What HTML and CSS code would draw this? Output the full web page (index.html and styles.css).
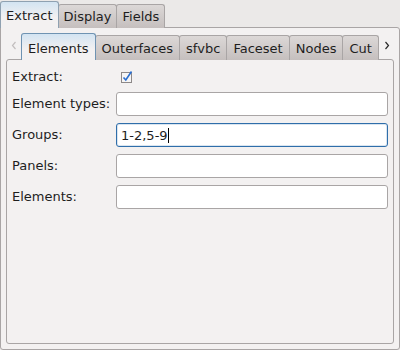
FILE: index.html
```html
<!DOCTYPE html>
<html lang="en">
<head>
  <meta charset="UTF-8">
  <title>Extract</title>
  <link rel="stylesheet" href="styles.css">
</head>
<body>
  <div class="tabwidget outer">
    <div class="tabbar">
      <div class="tab selected">Extract</div>
      <div class="tab">Display</div>
      <div class="tab">Fields</div>
    </div>
    <div class="pane">
      <div class="tabwidget inner">
        <div class="tabbar">
          <div class="scroll">
            <svg width="6" height="9" viewBox="0 0 6 9"><polyline points="4.5,1 1.5,4.5 4.5,8" fill="none" stroke="#c2bebe" stroke-width="1.2"/></svg>
          </div>
          <div class="tab selected">Elements</div>
          <div class="tab">Outerfaces</div>
          <div class="tab">sfvbc</div>
          <div class="tab">Faceset</div>
          <div class="tab">Nodes</div>
          <div class="tab last">Cut</div>
          <div class="scroll">
            <svg width="6" height="9" viewBox="0 0 6 9"><polyline points="1.5,1 4.5,4.5 1.5,8" fill="none" stroke="#2a2a2a" stroke-width="1.2"/></svg>
          </div>
        </div>
        <div class="pane">
          <div class="form">
            <label>Extract:</label>
            <div class="check">
              <svg width="13" height="13" viewBox="0 0 13 13">
                <rect x="0.5" y="2.5" width="10" height="10" fill="#f6f5f5" stroke="#8d8989"/>
                <polyline points="2.5,7.5 4.8,10 10.5,1.5" fill="none" stroke="#2b6fd0" stroke-width="1.6"/>
              </svg>
            </div>
            <label>Element types:</label>
            <div class="field"></div>
            <label>Groups:</label>
            <div class="field focus">1-2,5-9<span class="caret"></span></div>
            <label>Panels:</label>
            <div class="field"></div>
            <label>Elements:</label>
            <div class="field"></div>
          </div>
        </div>
      </div>
    </div>
  </div>
</body>
</html>
```

FILE: styles.css
```css
* {
  margin: 0;
  padding: 0;
  box-sizing: border-box;
}
body {
  background: #ebe9e8;
  color: #1e1e1e;
  font-family: 'DejaVu Sans', sans-serif;
  font-size: 13px;
  height: 350px;
  overflow: hidden;
}
.tabwidget {
  display: flex;
  flex-direction: column;
}
.outer {
  height: 350px;
}
.inner {
  flex: 1;
}
.tabbar {
  display: flex;
  align-items: flex-end;
  margin-bottom: -1px;
  position: relative;
  z-index: 1;
}
.outer > .tabbar {
  height: 28px;
}
.inner > .tabbar {
  height: 27px;
}
.tab {
  display: flex;
  align-items: center;
  border: 1px solid #a9a5a5;
  border-bottom: none;
  border-radius: 3px 3px 0 0;
  background: linear-gradient(#dcd8d7, #c5bfbe);
  white-space: nowrap;
  margin-left: -1px;
}
.outer > .tabbar > .tab {
  height: 24px;
  padding: 0 5px 1px;
}
.outer > .tabbar > .tab:first-child {
  margin-left: 0;
}
.inner > .tabbar > .tab {
  height: 25px;
  padding: 0 6px;
}
.tab.selected {
  background: linear-gradient(#d3e4f2, #f3f1f1 60%);
  border-color: #8fa1b1;
  border-bottom: none;
  position: relative;
  z-index: 2;
}
.outer > .tabbar > .tab.selected {
  height: 27px;
  padding: 0 5px;
}
.inner > .tabbar > .tab.selected {
  height: 27px;
  padding-top: 2px;
  border-color: #6f93b2;
}
.scroll {
  width: 16px;
  height: 27px;
  display: flex;
  align-items: center;
  justify-content: center;
  padding-bottom: 2px;
}
.scroll:last-child {
  width: 15px;
  margin-left: auto;
}
.pane {
  flex: 1;
  background: #f3f1f1;
  border: 1px solid #a9a5a5;
  border-radius: 0 3px 3px 3px;
  display: flex;
  flex-direction: column;
}
.outer > .pane {
  padding: 5px;
}
.inner > .pane {
  border-radius: 3px;
}
.form {
  display: grid;
  grid-template-columns: 104px 1fr;
  grid-template-rows: 17px;
  grid-auto-rows: 24px;
  row-gap: 7px;
  padding: 8px 5px 0;
  align-items: center;
}
.form label {
  padding-bottom: 1px;
}
.check {
  display: flex;
  padding-left: 5px;
}
.field {
  height: 24px;
  background: #fff;
  border: 1px solid #a9a5a5;
  border-radius: 3px;
  padding: 0 4px;
  display: flex;
  align-items: center;
  line-height: 15px;
}
.field.focus {
  border-color: #2f6eaa;
  box-shadow: inset 0 0 0 1px rgba(47, 110, 170, 0.18);
}
.caret {
  display: inline-block;
  width: 1px;
  height: 15px;
  background: #000;
}
```
